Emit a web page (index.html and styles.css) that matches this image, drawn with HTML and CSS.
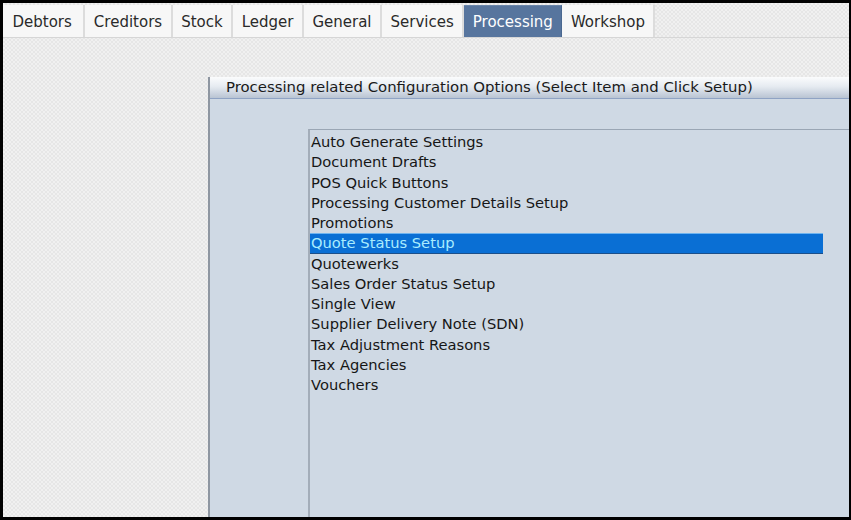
FILE: index.html
```html
<!DOCTYPE html>
<html>
<head>
<meta charset="utf-8">
<link rel="stylesheet" href="styles.css">
</head>
<body>
<div class="screen">
  <div class="tabbar">
    <div class="tab">Debtors</div>
    <div class="tab">Creditors</div>
    <div class="tab">Stock</div>
    <div class="tab">Ledger</div>
    <div class="tab">General</div>
    <div class="tab">Services</div>
    <div class="tab active">Processing</div>
    <div class="tab">Workshop</div>
  </div>
  <div class="workarea">
    <div class="sidebar"></div>
    <div class="panel">
      <div class="panel-header">Processing related Configuration Options (Select Item and Click Setup)</div>
      <div class="panel-body">
        <div class="listbox">
          <ul class="items">
            <li>Auto Generate Settings</li>
            <li>Document Drafts</li>
            <li>POS Quick Buttons</li>
            <li>Processing Customer Details Setup</li>
            <li>Promotions</li>
            <li class="selected">Quote Status Setup</li>
            <li>Quotewerks</li>
            <li>Sales Order Status Setup</li>
            <li>Single View</li>
            <li>Supplier Delivery Note (SDN)</li>
            <li>Tax Adjustment Reasons</li>
            <li>Tax Agencies</li>
            <li>Vouchers</li>
          </ul>
        </div>
      </div>
    </div>
  </div>
</div>
</body>
</html>
```
FILE: styles.css
```css
html, body {
  margin: 0;
  padding: 0;
  background: #000;
}
body {
  width: 851px;
  height: 520px;
  overflow: hidden;
  font-family: "DejaVu Sans", Verdana, sans-serif;
  font-size: 14.9px;
  color: #161616;
}
.screen {
  margin: 3px 2px 3px 3px;
  width: 846px;
  height: 514px;
  display: flex;
  flex-direction: column;
  background: repeating-conic-gradient(#e6e6e6 0 25%, #f0f0f0 0 50%) 0 0 / 4px 4px;
}
.tabbar {
  display: flex;
  align-items: flex-end;
  height: 35px;
  box-sizing: border-box;
  padding-top: 2px;
  border-bottom: 1px solid #d6d6d6;
}
.tab {
  height: 32px;
  box-sizing: border-box;
  display: flex;
  align-items: center;
  padding: 1px 8.5px 0 8.5px;
  background: #f7f7f7;
  border-right: 2px solid #dcdcdc;
  color: #2a2a2a;
  font-size: 15px;
  white-space: nowrap;
}
.tab:first-child {
  padding-left: 9.5px;
  padding-right: 11.5px;
}
.tab.active {
  background: #57759e;
  color: #fff;
  border-right: 1px solid #4a6890;
  border-top: 1px solid #6b86ab;
  padding-top: 0;
}
.workarea {
  flex: 1;
  display: flex;
  padding-top: 39px;
  min-height: 0;
}
.sidebar {
  width: 205px;
  flex: none;
}
.panel {
  flex: 1;
  display: flex;
  flex-direction: column;
  border-left: 2px solid #8e96a1;
}
.panel-header {
  height: 22px;
  box-sizing: border-box;
  padding: 1px 0 0 16px;
  background: linear-gradient(#fbfcfd 0%, #e6ebf1 45%, #b9c4d3 100%);
  border-bottom: 1px solid #8fa3c4;
  box-shadow: 0 1px 0 #e8eef5;
  white-space: nowrap;
  color: #1a1a1a;
}
.panel-body {
  flex: 1;
  background: #cfd9e4;
  padding: 30px 0 0 98px;
  display: flex;
}
.listbox {
  flex: 1;
  border-top: 1px solid #9aa6b4;
  border-left: 2px solid #a3adb9;
  padding-top: 2px;
}
.items {
  list-style: none;
  margin: 0;
  padding: 0;
  width: 513px;
  font-size: 14.7px;
}
.items li {
  height: 20.25px;
  line-height: 20px;
  padding-left: 1px;
  white-space: nowrap;
}
.items li.selected {
  background: #0a6fd4;
  color: #a9ecff;
  box-shadow: inset 0 1px 0 #6fb4ef, inset 0 -1px 0 #1b4f8a;
}
```
